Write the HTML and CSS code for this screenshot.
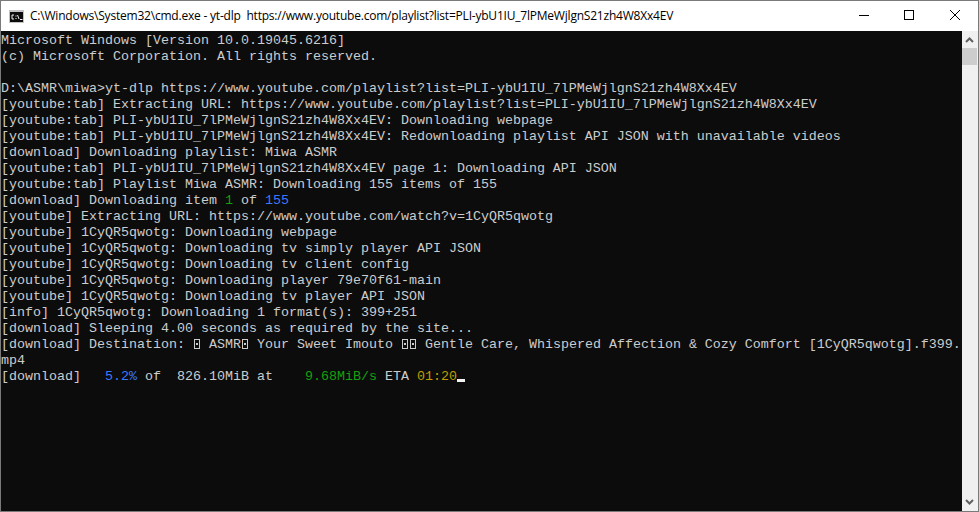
FILE: index.html
```html
<!DOCTYPE html>
<html lang="en">
<head>
<meta charset="utf-8">
<title>cmd.exe - yt-dlp</title>
<link rel="stylesheet" href="styles.css">
</head>
<body>
<div class="window">
  <header class="titlebar">
    <svg class="app-icon" width="16" height="14" viewBox="0 0 16 14">
      <rect x="0" y="0" width="15" height="13" fill="#c4c4c4"/>
      <rect x="1" y="2" width="13" height="10" fill="#0c0c0c"/>
      <path d="M5 5h-2v4h2M7 5.500v1M7 8v1M8.500 5l1.500 4M11 9.500h2.500" fill="none" stroke="#f0f0f0"/>
    </svg>
    <span class="title">C:\Windows\System32\cmd.exe - yt-dlp&nbsp; https://www.youtube.com/playlist?list=PLI-ybU1IU_7lPMeWjlgnS21zh4W8Xx4EV</span>
    <div class="controls">
      <svg width="10" height="10" viewBox="0 0 10 10"><path d="M0 5.500h10" stroke="#000"/></svg>
      <svg width="10" height="10" viewBox="0 0 10 10"><rect x="0.500" y="0.500" width="9" height="9" fill="none" stroke="#000"/></svg>
      <svg class="close" width="10" height="10" viewBox="0 0 10 10"><path d="M0 0l10 10M10 0L0 10" stroke="#000" stroke-width="1"/></svg>
    </div>
  </header>
  <div class="body">
    <main class="console">
      <div class="line">Microsoft Windows [Version 10.0.19045.6216]</div>
      <div class="line">(c) Microsoft Corporation. All rights reserved.</div>
      <div class="line">&nbsp;</div>
      <div class="line">D:\ASMR\miwa&gt;yt-dlp https://www.youtube.com/playlist?list=PLI-ybU1IU_7lPMeWjlgnS21zh4W8Xx4EV</div>
      <div class="line">[youtube:tab] Extracting URL: https://www.youtube.com/playlist?list=PLI-ybU1IU_7lPMeWjlgnS21zh4W8Xx4EV</div>
      <div class="line">[youtube:tab] PLI-ybU1IU_7lPMeWjlgnS21zh4W8Xx4EV: Downloading webpage</div>
      <div class="line">[youtube:tab] PLI-ybU1IU_7lPMeWjlgnS21zh4W8Xx4EV: Redownloading playlist API JSON with unavailable videos</div>
      <div class="line">[download] Downloading playlist: Miwa ASMR</div>
      <div class="line">[youtube:tab] PLI-ybU1IU_7lPMeWjlgnS21zh4W8Xx4EV page 1: Downloading API JSON</div>
      <div class="line">[youtube:tab] Playlist Miwa ASMR: Downloading 155 items of 155</div>
      <div class="line">[download] Downloading item <span class="green">1</span> of <span class="blue">155</span></div>
      <div class="line">[youtube] Extracting URL: https://www.youtube.com/watch?v=1CyQR5qwotg</div>
      <div class="line">[youtube] 1CyQR5qwotg: Downloading webpage</div>
      <div class="line">[youtube] 1CyQR5qwotg: Downloading tv simply player API JSON</div>
      <div class="line">[youtube] 1CyQR5qwotg: Downloading tv client config</div>
      <div class="line">[youtube] 1CyQR5qwotg: Downloading player 79e70f61-main</div>
      <div class="line">[youtube] 1CyQR5qwotg: Downloading tv player API JSON</div>
      <div class="line">[info] 1CyQR5qwotg: Downloading 1 format(s): 399+251</div>
      <div class="line">[download] Sleeping 4.00 seconds as required by the site...</div>
      <div class="line">[download] Destination: <span class="tofu"></span> ASMR<span class="tofu"></span> Your Sweet Imouto <span class="tofu"></span><span class="tofu"></span> Gentle Care, Whispered Affection &amp; Cozy Comfort [1CyQR5qwotg].f399.</div>
      <div class="line">mp4</div>
      <div class="line">[download]   <span class="blue">5.2%</span> of  826.10MiB at    <span class="green">9.68MiB/s</span> ETA <span class="yellow">01:20</span><span class="cursor"></span></div>
    </main>
    <aside class="scrollbar">
      <svg width="15" height="17" viewBox="0 0 15 17"><path d="M4 11l3.500-3.500L11 11" fill="none" stroke="#606060" stroke-width="2"/></svg>
      <div class="thumb"></div>
      <div class="track"></div>
      <svg width="15" height="17" viewBox="0 0 15 17"><path d="M4 6l3.500 3.500L11 6" fill="none" stroke="#606060" stroke-width="2"/></svg>
    </aside>
  </div>
</div>
</body>
</html>
```

FILE: styles.css
```css
html, body {
  margin: 0;
  height: 100%;
  overflow: hidden;
}

.window {
  box-sizing: border-box;
  width: 979px;
  height: 512px;
  border: 1px solid #7a7a7a;
  display: flex;
  flex-direction: column;
  background: #fff;
}

.titlebar {
  box-sizing: border-box;
  height: 30px;
  flex: none;
  display: flex;
  align-items: center;
  padding: 0 0 2px 8px;
  font-family: "Open Sans", "Liberation Sans", sans-serif;
  font-size: 12px;
  color: #000;
}

.app-icon {
  flex: none;
  margin: 3px 5px 0 0;
}

.title {
  white-space: pre;
  letter-spacing: -0.21px;
}

.controls {
  margin-left: auto;
  display: flex;
  align-items: center;
  gap: 35px;
  padding-right: 18px;
}

.close {
  margin-left: 1px;
}

.body {
  flex: 1;
  display: flex;
  min-height: 0;
}

.console {
  flex: 1;
  background: #0c0c0c;
  color: #cccccc;
  font-family: "Liberation Mono", monospace;
  font-size: 13.33px;
  padding-top: 2px;
  overflow: hidden;
}

.line {
  height: 16px;
  line-height: 16px;
  white-space: pre;
}

.green { color: #13a10e; }
.blue { color: #3b78ff; }
.yellow { color: #c19c00; }

.tofu {
  display: inline-block;
  box-sizing: border-box;
  width: 6px;
  height: 10px;
  margin: 0 1px;
  border: 1px solid #cccccc;
  background: linear-gradient(#cccccc, #cccccc) center / 2px 2px no-repeat;
  vertical-align: -1px;
}

.cursor {
  display: inline-block;
  width: 8px;
  height: 3px;
  background: #f2f2f2;
  vertical-align: -2px;
}

.scrollbar {
  width: 16px;
  flex: none;
  background: #f0f0f0;
  display: flex;
  flex-direction: column;
}

.scrollbar svg {
  flex: none;
  display: block;
}

.thumb {
  height: 17px;
  flex: none;
  width: 15px;
  background: #cdcdcd;
}

.track {
  flex: 1;
}
```
